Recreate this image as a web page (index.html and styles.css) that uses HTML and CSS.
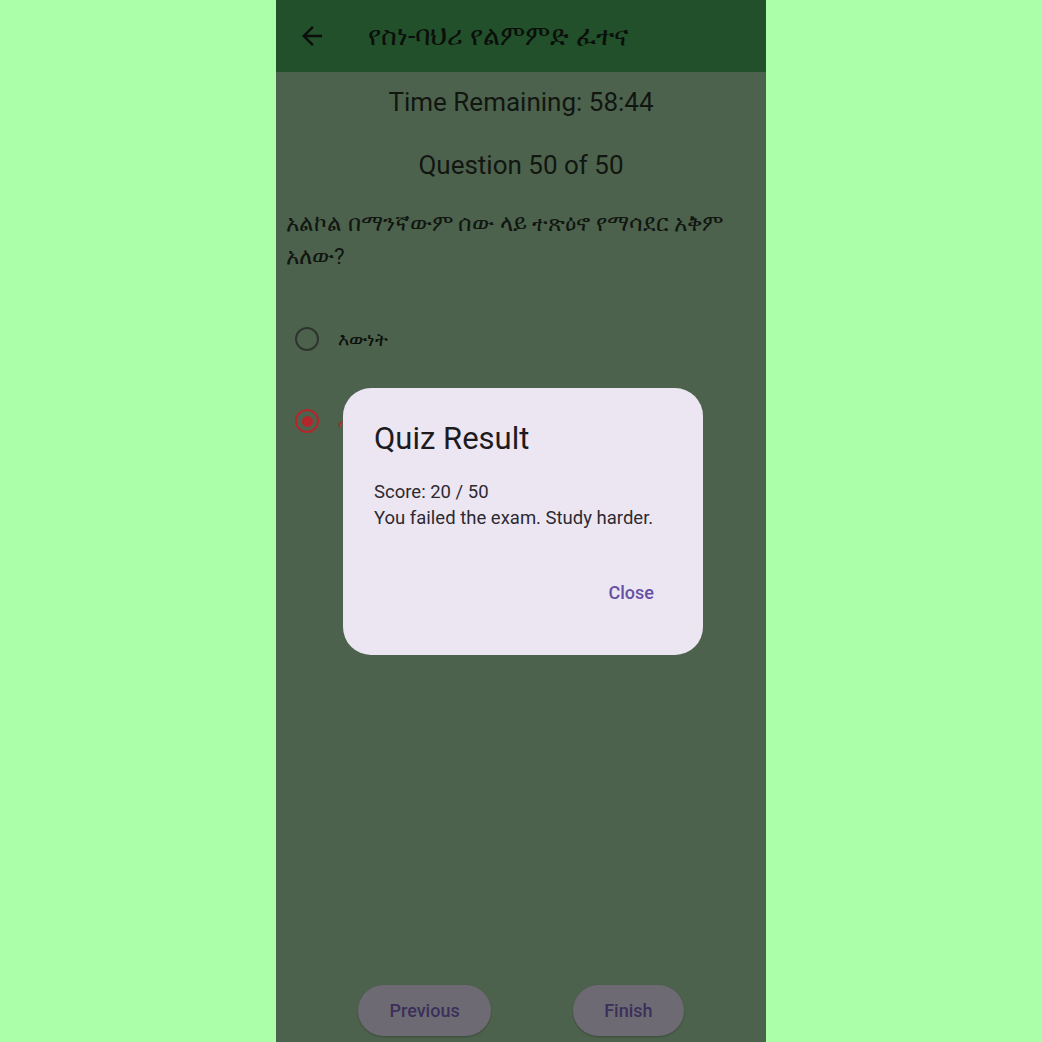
FILE: index.html
```html
<!DOCTYPE html>
<html lang="am">
<head>
<meta charset="utf-8">
<title>Quiz</title>
<link rel="stylesheet" href="styles.css">
</head>
<body>
<div class="phone">
  <header class="appbar">
    <svg class="back" viewBox="0 0 24 24" width="30" height="30"><path d="M20 11H7.83l5.59-5.59L12 4l-8 8 8 8 1.41-1.41L7.83 13H20v-2z" fill="#0b0f0b"/></svg>
    <h1 class="title">የስነ-ባህሪ የልምምድ ፈተና</h1>
  </header>
  <main class="content">
    <div class="time">Time Remaining: 58:44</div>
    <div class="qnum">Question 50 of 50</div>
    <p class="question">አልኮል በማንኛውም ሰው ላይ ተጽዕኖ የማሳደር አቅም አለው?</p>
    <div class="option">
      <span class="radio"></span>
      <span class="opt-text">እውነት</span>
    </div>
    <div class="option wrong">
      <span class="radio"><span class="dot"></span></span>
      <span class="opt-text">ሐሰት</span>
    </div>
    <div class="spacer"></div>
    <div class="nav">
      <button class="pill">Previous</button>
      <button class="pill">Finish</button>
    </div>
  </main>
  <div class="overlay">
    <div class="dialog">
      <h2 class="d-title">Quiz Result</h2>
      <p class="d-body">Score: 20 / 50<br>You failed the exam. Study harder.</p>
      <div class="d-actions"><button class="d-btn">Close</button></div>
    </div>
  </div>
</div>
</body>
</html>
```
FILE: styles.css
```css
html, body {
  margin: 0;
  padding: 0;
  height: 100%;
}
body {
  background: #abffa8;
  display: flex;
  justify-content: center;
  font-family: "Roboto", "Noto Sans", "DejaVu Sans", sans-serif;
}
.phone {
  position: relative;
  width: 490px;
  height: 1042px;
  display: flex;
  flex-direction: column;
  background: #4d624d;
  overflow: hidden;
}
.appbar {
  height: 72px;
  flex: none;
  background: #22502a;
  display: flex;
  align-items: center;
  padding-left: 21px;
}
.back {
  display: block;
}
.title {
  margin: 0 0 0 41px;
  font-size: 27px;
  font-weight: 400;
  color: #0b0f0b;
  line-height: 1;
}
.content {
  flex: 1;
  display: flex;
  flex-direction: column;
  padding: 15px 10px 0 10px;
  color: #111611;
}
.time {
  font-size: 26px;
  line-height: 31px;
  text-align: center;
}
.qnum {
  margin-top: 32px;
  font-size: 26px;
  line-height: 31px;
  text-align: center;
}
.question {
  margin: 26px 0 0 0;
  font-size: 22.5px;
  line-height: 33px;
}
.option {
  height: 82px;
  display: flex;
  align-items: center;
}
.question + .option {
  margin-top: 25px;
}
.radio {
  box-sizing: border-box;
  width: 24px;
  height: 24px;
  margin-left: 9px;
  border: 2.5px solid #2e342e;
  border-radius: 50%;
  display: flex;
  align-items: center;
  justify-content: center;
}
.opt-text {
  margin-left: 19px;
  font-size: 19px;
  color: #0b0f0b;
}
.wrong .radio {
  border-color: #b3272a;
}
.wrong .dot {
  width: 11px;
  height: 11px;
  border-radius: 50%;
  background: #b3272a;
}
.wrong .opt-text {
  color: #b3272a;
}
.spacer {
  flex: 1;
}
.nav {
  display: flex;
  justify-content: space-evenly;
  padding-bottom: 6px;
  margin: 0 -10px;
}
.pill {
  height: 51px;
  border: none;
  border-radius: 26px;
  background: #6e6a74;
  color: #3a3059;
  font-family: "Roboto", sans-serif;
  font-size: 18px;
  font-weight: 500;
  padding: 0 31px;
  box-shadow: 0 1px 2px rgba(0,0,0,0.25);
}
.overlay {
  position: absolute;
  inset: 0;
  display: flex;
  align-items: center;
  justify-content: center;
  padding-left: 4px;
}
.dialog {
  box-sizing: border-box;
  width: 360px;
  height: 267px;
  background: #ece6f3;
  border-radius: 28px;
  padding: 31px 31px 0 31px;
  display: flex;
  flex-direction: column;
  color: #1d1b20;
}
.d-title {
  margin: 0;
  font-size: 31px;
  font-weight: 400;
  line-height: 40px;
}
.d-body {
  margin: 20px 0 0 0;
  font-size: 18.5px;
  line-height: 26px;
  color: #2c2a30;
}
.d-actions {
  display: flex;
  justify-content: flex-end;
  margin-top: 51px;
}
.d-btn {
  border: none;
  background: none;
  padding: 0 18px 0 0;
  font-family: "Roboto", sans-serif;
  font-size: 18px;
  font-weight: 500;
  color: #6750a4;
}
```
